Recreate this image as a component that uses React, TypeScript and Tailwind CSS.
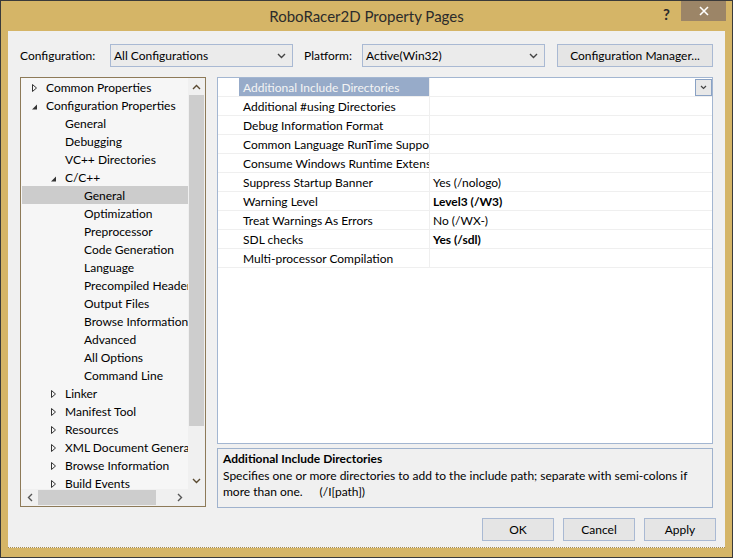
import React from 'react';

type TreeItem = {
  label: string;
  level: number;
  state?: 'open' | 'closed';
  selected?: boolean;
};

const tree: TreeItem[] = [
  { label: 'Common Properties', level: 0, state: 'closed' },
  { label: 'Configuration Properties', level: 0, state: 'open' },
  { label: 'General', level: 1 },
  { label: 'Debugging', level: 1 },
  { label: 'VC++ Directories', level: 1 },
  { label: 'C/C++', level: 1, state: 'open' },
  { label: 'General', level: 2, selected: true },
  { label: 'Optimization', level: 2 },
  { label: 'Preprocessor', level: 2 },
  { label: 'Code Generation', level: 2 },
  { label: 'Language', level: 2 },
  { label: 'Precompiled Headers', level: 2 },
  { label: 'Output Files', level: 2 },
  { label: 'Browse Information', level: 2 },
  { label: 'Advanced', level: 2 },
  { label: 'All Options', level: 2 },
  { label: 'Command Line', level: 2 },
  { label: 'Linker', level: 1, state: 'closed' },
  { label: 'Manifest Tool', level: 1, state: 'closed' },
  { label: 'Resources', level: 1, state: 'closed' },
  { label: 'XML Document Generator', level: 1, state: 'closed' },
  { label: 'Browse Information', level: 1, state: 'closed' },
  { label: 'Build Events', level: 1, state: 'closed' },
];

type Prop = { name: string; value?: string; bold?: boolean };

const props: Prop[] = [
  { name: 'Additional Include Directories' },
  { name: 'Additional #using Directories' },
  { name: 'Debug Information Format' },
  { name: 'Common Language RunTime Support' },
  { name: 'Consume Windows Runtime Extension' },
  { name: 'Suppress Startup Banner', value: 'Yes (/nologo)' },
  { name: 'Warning Level', value: 'Level3 (/W3)', bold: true },
  { name: 'Treat Warnings As Errors', value: 'No (/WX-)' },
  { name: 'SDL checks', value: 'Yes (/sdl)', bold: true },
  { name: 'Multi-processor Compilation' },
];

const Chevron = ({ up = false, color = '#444' }: { up?: boolean; color?: string }) => (
  <svg width="9" height="6" viewBox="0 0 9 6">
    <polyline
      points={up ? '1,5 4.5,1.5 8,5' : '1,1 4.5,4.5 8,1'}
      fill="none"
      stroke={color}
      strokeWidth="1.4"
    />
  </svg>
);

const SideChevron = ({ left = false }: { left?: boolean }) => (
  <svg width="6" height="9" viewBox="0 0 6 9">
    <polyline
      points={left ? '5,1 1.5,4.5 5,8' : '1,1 4.5,4.5 1,8'}
      fill="none"
      stroke="#555"
      strokeWidth="1.4"
    />
  </svg>
);

const Expander = ({ state }: { state?: 'open' | 'closed' }) => (
  <svg width="17" height="18" viewBox="0 0 17 18" className="shrink-0">
    {state === 'closed' && (
      <path d="M3.5 5.5 L7.5 9 L3.5 12.5 Z" fill="none" stroke="#333" strokeWidth="1" />
    )}
    {state === 'open' && <path d="M8 7.5 L8 12.5 L3 12.5 Z" fill="#333" />}
  </svg>
);

const Combo = ({ text }: { text: string }) => (
  <div className="flex h-[23px] w-[183px] items-center justify-between border border-[#a9b9d3] bg-[#ebebeb] pl-[3px] pr-[6px]">
    <span>{text}</span>
    <Chevron />
  </div>
);

const Button = ({ text, className = '' }: { text: string; className?: string }) => (
  <div
    className={`flex h-[23px] items-center justify-center border border-[#a9b9d3] bg-[#e5e5e5] ${className}`}
  >
    {text}
  </div>
);

export default function App() {
  return (
    <div className="flex h-[558px] w-[733px] flex-col border border-[#3a3a3a] bg-[#d5b567] font-['Lato',sans-serif] text-[12px] text-black">
      <div className="grid h-[30px] grid-cols-[1fr_auto_1fr]">
        <div />
        <div className="flex items-center pt-[1px] text-[15px] text-[#2b2b2b]">
          RoboRacer2D Property Pages
        </div>
        <div className="flex items-start justify-end pr-[6px]">
          <span className="mr-[11px] mt-[2px] text-[15px] font-bold text-[#2b2b2b]">?</span>
          <div className="flex h-[20px] w-[45px] items-center justify-center bg-[#9c8567]">
            <svg width="10" height="10" viewBox="0 0 10 10">
              <path d="M1 1 L9 9 M9 1 L1 9" stroke="#fff" strokeWidth="1.6" />
            </svg>
          </div>
        </div>
      </div>

      <div className="ml-[7px] flex h-[517px] w-[717px] flex-col border-b border-dotted border-[#a88c4c] bg-[#f0f0f0] px-[12px] pt-[13px]">
        <div className="flex h-[23px] items-center">
          <span className="w-[90px]">Configuration:</span>
          <Combo text="All Configurations" />
          <span className="ml-[11px] w-[58px]">Platform:</span>
          <Combo text="Active(Win32)" />
          <Button text="Configuration Manager..." className="ml-[12px] w-[156px]" />
        </div>

        <div className="mt-[10px] flex h-[431px]">
          <div className="flex h-[430px] w-[186px] flex-col border border-[#8d7a58] bg-[#f6f6f6]">
            <div className="flex h-[411px]">
              <div className="w-[167px] overflow-hidden">
                {tree.map((item, i) => (
                  <div
                    key={i}
                    className={`flex h-[18px] items-center whitespace-nowrap pt-[2px] ${
                      item.selected ? 'ml-[1px] bg-[#cccccc]' : ''
                    }`}
                    style={{ paddingLeft: item.level * 19 + (item.selected ? 7 : 8) }}
                  >
                    <Expander state={item.state} />
                    <span>{item.label}</span>
                  </div>
                ))}
              </div>
              <div className="flex w-[17px] flex-col bg-[#f0f0f0]">
                <div className="flex h-[17px] items-center justify-center">
                  <Chevron up color="#5a4a30" />
                </div>
                <div className="ml-[1px] h-[331px] w-[15px] bg-[#cdcdcd]" />
                <div className="flex-1" />
                <div className="flex h-[17px] items-center justify-center">
                  <Chevron color="#5a4a30" />
                </div>
              </div>
            </div>
            <div className="flex h-[17px] items-center bg-[#f0f0f0]">
              <div className="flex h-[17px] w-[17px] items-center justify-center">
                <SideChevron left />
              </div>
              <div className="h-[15px] w-[118px] bg-[#cdcdcd]" />
              <div className="flex-1" />
              <div className="flex h-[17px] w-[17px] items-center justify-center">
                <SideChevron />
              </div>
              <div className="h-[17px] w-[17px]" />
            </div>
          </div>

          <div className="ml-[11px] flex w-[496px] flex-col">
            <div className="h-[367px] border border-[#a3b6d1] bg-white">
              {props.map((p, i) => (
                <div key={i} className="flex h-[19px] border-b border-[#efefef]">
                  <div className="w-[21px]" />
                  <div
                    className={`flex w-[190px] items-center overflow-hidden whitespace-nowrap pl-[4px] pt-[2px] ${
                      i === 0 ? 'bg-[#97abc9] text-[#f4f4f4]' : ''
                    }`}
                  >
                    {p.name}
                  </div>
                  <div className="w-px bg-[#efefef]" />
                  <div className={`flex flex-1 items-center justify-between pl-[3px] ${p.bold ? 'font-bold' : ''}`}>
                    <span className="pt-[2px]">{p.value}</span>
                    {i === 0 && (
                      <div className="flex h-[17px] w-[17px] items-center justify-center border border-[#8aa2c4] bg-[#e8e8e8]">
                        <svg width="7" height="5" viewBox="0 0 7 5">
                          <polyline points="1,1 3.5,3.5 6,1" fill="none" stroke="#444" strokeWidth="1.2" />
                        </svg>
                      </div>
                    )}
                  </div>
                </div>
              ))}
            </div>
            <div className="mt-[4px] h-[60px] border border-[#9fb2cd] bg-[#f0f0f0] px-[5px] pt-[1px]">
              <div className="font-bold leading-[18px]">Additional Include Directories</div>
              <div className="leading-[16px]">
                Specifies one or more directories to add to the include path; separate with semi-colons if
                more than one.<span className="pl-[17px]">(/I[path])</span>
              </div>
            </div>
          </div>
        </div>

        <div className="-mr-[3px] mt-[10px] flex justify-end gap-[9px]">
          <Button text="OK" className="w-[72px]" />
          <Button text="Cancel" className="w-[72px]" />
          <Button text="Apply" className="w-[72px]" />
        </div>
      </div>
    </div>
  );
}
